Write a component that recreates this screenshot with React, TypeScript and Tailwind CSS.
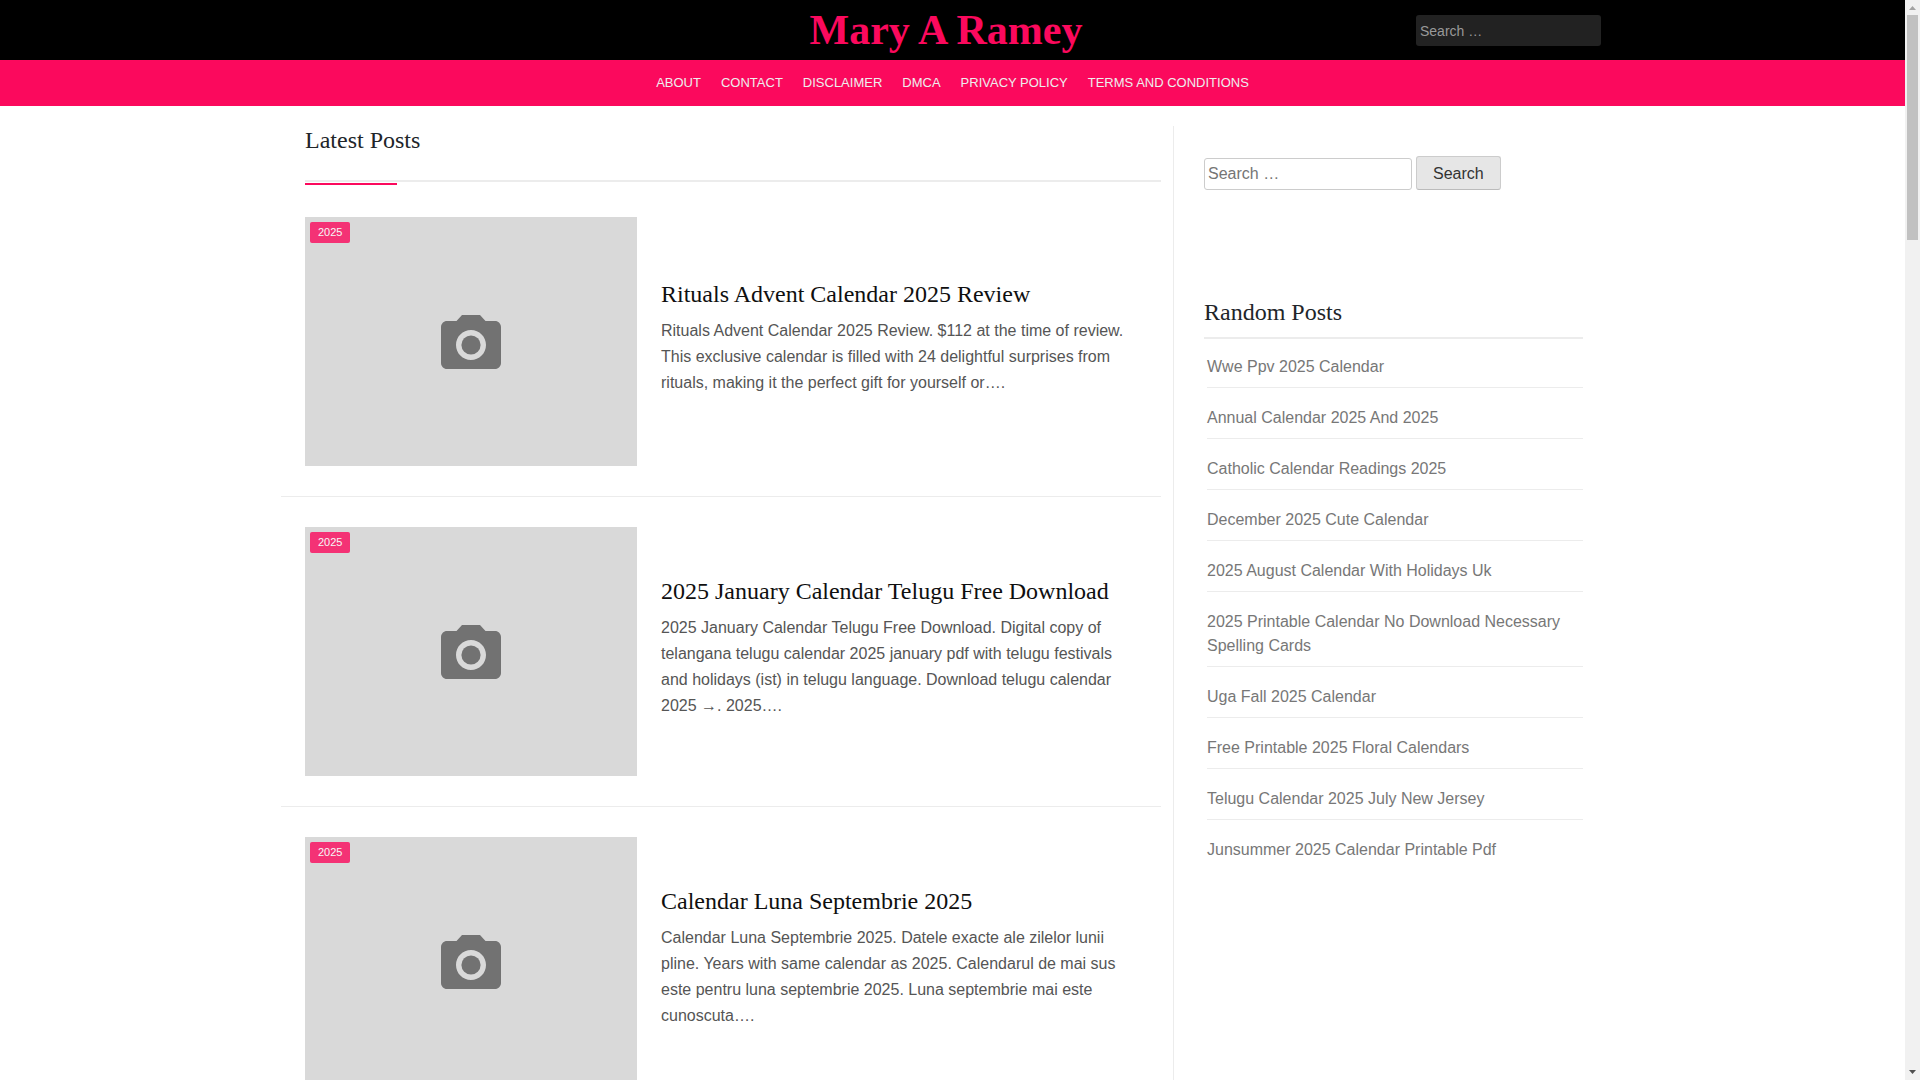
import React from 'react';

const NAV_LINKS = ['About', 'Contact', 'Disclaimer', 'DMCA', 'Privacy Policy', 'Terms and Conditions'];

const POSTS = [
  {
    title: 'Rituals Advent Calendar 2025 Review',
    category: '2025',
    excerpt:
      'Rituals Advent Calendar 2025 Review. $112 at the time of review. This exclusive calendar is filled with 24 delightful surprises from rituals, making it the perfect gift for yourself or….',
  },
  {
    title: '2025 January Calendar Telugu Free Download',
    category: '2025',
    excerpt:
      '2025 January Calendar Telugu Free Download. Digital copy of telangana telugu calendar 2025 january pdf with telugu festivals and holidays (ist) in telugu language. Download telugu calendar 2025 →. 2025….',
  },
  {
    title: 'Calendar Luna Septembrie 2025',
    category: '2025',
    excerpt:
      'Calendar Luna Septembrie 2025. Datele exacte ale zilelor lunii pline. Years with same calendar as 2025. Calendarul de mai sus este pentru luna septembrie 2025. Luna septembrie mai este cunoscuta….',
  },
];

const RANDOM_POSTS = [
  'Wwe Ppv 2025 Calendar',
  'Annual Calendar 2025 And 2025',
  'Catholic Calendar Readings 2025',
  'December 2025 Cute Calendar',
  '2025 August Calendar With Holidays Uk',
  '2025 Printable Calendar No Download Necessary Spelling Cards',
  'Uga Fall 2025 Calendar',
  'Free Printable 2025 Floral Calendars',
  'Telugu Calendar 2025 July New Jersey',
  'Junsummer 2025 Calendar Printable Pdf',
];

const CameraIcon: React.FC = () => (
  <svg viewBox="2 2 20 18" className="h-[54px] w-[60px]" fill="#727272" aria-hidden="true">
    <circle cx="12" cy="12" r="3.2" />
    <path d="M9 2L7.17 4H4c-1.1 0-2 .9-2 2v12c0 1.1.9 2 2 2h16c1.1 0 2-.9 2-2V6c0-1.1-.9-2-2-2h-3.17L15 2H9zm3 15c-2.76 0-5-2.24-5-5s2.24-5 5-5 5 2.24 5 5-2.24 5-5 5z" />
  </svg>
);

const Header: React.FC = () => (
  <header>
    <div className="bg-black">
      <div className="mx-auto grid h-[60px] max-w-[1297px] grid-cols-[33%_33%_34%]">
        <h1 className="col-start-2 text-center font-['Liberation_Serif',serif] text-[42px] leading-[60px] font-bold whitespace-nowrap text-[#fb095d]">
          <a href="#">Mary A Ramey</a>
        </h1>
        <form role="search" className="flex items-start justify-end pt-[15px]">
          <input
            type="search"
            aria-label="Search for"
            placeholder="Search …"
            className="h-[31px] w-[185px] rounded-[3px] bg-[#222] px-1 text-sm text-[#999] placeholder:text-[#999] placeholder:opacity-100"
          />
        </form>
      </div>
    </div>
    <nav className="bg-[#fb095d]">
      <ul className="flex h-[46px] items-center justify-center gap-5 text-[13px] leading-[20px] text-[#eee] uppercase">
        {NAV_LINKS.map(link => (
          <li key={link}>
            <a href="#">{link}</a>
          </li>
        ))}
      </ul>
    </nav>
  </header>
);

const PostItem: React.FC<{ post: (typeof POSTS)[number] }> = ({ post }) => (
  <article className="mb-[30px] flex items-center border-b border-[#ececec] pb-[30px] pl-6">
    <a href="#" aria-label={post.title} className="relative flex aspect-[4/3] w-[332px] shrink-0 items-center justify-center bg-[#d9d9d9]">
      <CameraIcon />
      <span className="absolute top-[5px] left-[5px] rounded-[2px] bg-[#fb095d] px-2 text-[11px] leading-[21px] text-white opacity-80">
        {post.category}
      </span>
    </a>
    <div className="flex-1 px-6 pb-2">
      <h2 className="mb-2 font-['Liberation_Serif',serif] text-2xl leading-[31px] text-[#0f0f0f]">
        <a href="#">{post.title}</a>
      </h2>
      <p className="text-base leading-[26px] text-[#555]">{post.excerpt}</p>
    </div>
  </article>
);

const Sidebar: React.FC = () => (
  <aside className="w-[451px] shrink-0 border-l border-[#ececec] pt-[30px] pr-[41px] pl-[30px]">
    <form role="search" className="flex items-end gap-1">
      <input
        type="search"
        aria-label="Search for"
        placeholder="Search …"
        className="h-8 w-[208px] rounded-[3px] border border-[#ccc] px-[3px] text-base text-[#666] placeholder:text-[#757575] placeholder:opacity-100"
      />
      <button
        type="button"
        className="h-[34px] rounded-[3px] border border-[#ccc] border-b-[#bbb] bg-[#e6e6e6] px-4 pt-[2px] text-base leading-[30px] text-[#333]"
      >
        Search
      </button>
    </form>

    <section className="mt-[108px]">
      <h2 className="border-b-2 border-[#ececec] pb-[10px] font-['Liberation_Serif',serif] text-2xl leading-[29px] text-[#212529]">
        Random Posts
      </h2>
      <ul className="flex flex-col gap-[2px] pl-[3px]">
        {RANDOM_POSTS.map(title => (
          <li key={title} className="border-b border-[#ececec] pt-4 pb-2 leading-6 text-[#777] last:border-b-0">
            <a href="#">{title}</a>
          </li>
        ))}
      </ul>
    </section>
  </aside>
);

// Classic scrollbar track with end arrows
const Scrollbar: React.FC = () => (
  <div className="flex w-[15px] shrink-0 flex-col items-center bg-[#f1f1f1]" aria-hidden="true">
    <svg viewBox="0 0 15 15" className="size-[15px] shrink-0" fill="#a3a3a3">
      <path d="M4 10L7.5 6L11 10Z" />
    </svg>
    <div className="h-[225px] w-[11px] bg-[#c1c1c1]" />
    <svg viewBox="0 0 15 15" className="mt-auto size-[15px] shrink-0" fill="#505050">
      <path d="M4 5H11L7.5 9Z" />
    </svg>
  </div>
);

export default function App() {
  return (
    <div className="flex h-screen overflow-hidden bg-white font-['Liberation_Sans',Arial,sans-serif] text-base">
      <div className="min-w-0 flex-1">
        <Header />
        <div className="mx-auto flex max-w-[1343px] pt-5">
          <main className="mr-3 min-w-0 flex-1">
            <div className="relative mb-[35px] ml-6 border-b-2 border-[#ececec] pb-[25px]">
              <h2 className="font-['Liberation_Serif',serif] text-2xl leading-[29px] text-[#212529]">Latest Posts</h2>
              <span className="absolute -bottom-[5px] left-0 h-[2px] w-[92px] bg-[#fb095d]" />
            </div>
            {POSTS.map(post => (
              <PostItem key={post.title} post={post} />
            ))}
          </main>
          <Sidebar />
        </div>
      </div>
      <Scrollbar />
    </div>
  );
}
